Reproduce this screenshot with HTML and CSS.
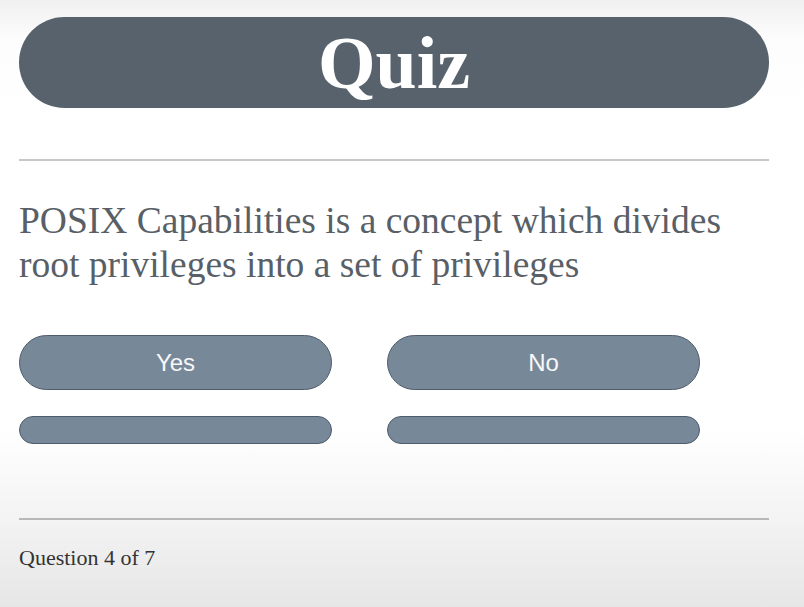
FILE: index.html
```html
<!DOCTYPE html>
<html>
<head>
<meta charset="utf-8">
<link rel="stylesheet" href="styles.css">
</head>
<body>
<main class="page">
  <header class="title-bar"><h1 class="title">Quiz</h1></header>
  <hr class="rule rule-top">
  <p class="question">POSIX Capabilities is a concept which divides root privileges into a set of privileges</p>
  <div class="answers">
    <button class="answer">Yes</button>
    <button class="answer">No</button>
    <button class="answer answer-empty"></button>
    <button class="answer answer-empty"></button>
  </div>
  <hr class="rule rule-bottom">
  <p class="progress">Question 4 of 7</p>
</main>
</body>
</html>
```
FILE: styles.css
```css
html, body {
  margin: 0;
  height: 100%;
}
body {
  background: linear-gradient(to bottom, #f0f0f0 0px, #fdfdfd 40px, #ffffff 120px, #ffffff 430px, #f3f3f3 520px, #e6e6e6 607px);
  font-family: "Liberation Serif", "Times New Roman", serif;
  overflow: hidden;
}
.page {
  padding: 17px 35px 0 19px;
  display: flex;
  flex-direction: column;
}
.title-bar {
  height: 91px;
  background: #58626c;
  border-radius: 46px;
  display: flex;
  align-items: center;
  justify-content: center;
}
.title {
  margin: 0;
  color: #ffffff;
  font-size: 74px;
  font-weight: bold;
  line-height: 1;
  position: relative;
  top: 0;
}
.rule {
  border: 0;
  height: 2px;
  background: #c8c8c8;
  margin: 0;
}
.rule-top {
  margin-top: 51px;
}
.question {
  margin: 38px 0 0;
  color: #595f66;
  font-size: 37.5px;
  line-height: 44px;
}
.answers {
  margin-top: 48px;
  display: grid;
  grid-template-columns: 313px 313px;
  column-gap: 55px;
  row-gap: 26px;
}
.answer {
  height: 55px;
  background: #778899;
  border: 1px solid #4e5c6b;
  border-radius: 28px;
  color: #f7f7f7;
  font-family: "Liberation Sans", Arial, sans-serif;
  font-size: 24px;
  padding: 0;
}
.answer-empty {
  height: 28px;
  border-radius: 14px;
}
.rule-bottom {
  margin-top: 74px;
  background: #b8b8b8;
}
.progress {
  margin: 25px 0 0;
  color: #333333;
  font-size: 22px;
}
```
